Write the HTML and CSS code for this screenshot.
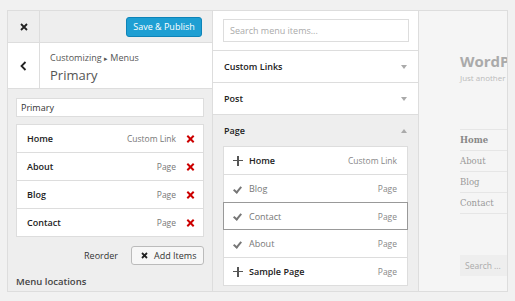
FILE: index.html
```html
<!DOCTYPE html>
<html lang="en">
  <head>
    <meta charset="UTF-8" />
    <title>Customizing Menus</title>
    <link rel="stylesheet" href="styles.css">
  </head>
  <body>
    <div class="frame">
      <div class="sidebar">
        <div class="sidebar-top">
          <div class="close-cell">
            <svg width="8" height="8" viewBox="0 0 8 8"><path d="M1 1L7 7M7 1L1 7" stroke="#222" stroke-width="1.8"/></svg>
          </div>
          <button class="publish">Save &amp; Publish</button>
        </div>
        <div class="sidebar-title">
          <div class="back-cell">
            <svg width="7" height="10" viewBox="0 0 7 10"><path d="M5.5 1L1.5 5L5.5 9" fill="none" stroke="#222" stroke-width="1.8"/></svg>
          </div>
          <div class="title-text">
            <div class="crumb">Customizing <span class="crumb-arrow">&#9656;</span> Menus</div>
            <div class="menu-title">Primary</div>
          </div>
        </div>
        <div class="sidebar-body">
          <div class="name-input">Primary</div>
          <ul class="menu-list">
            <li><b>Home</b><span class="type">Custom Link</span><span class="remove"></span></li>
            <li><b>About</b><span class="type">Page</span><span class="remove"></span></li>
            <li><b>Blog</b><span class="type">Page</span><span class="remove"></span></li>
            <li><b>Contact</b><span class="type">Page</span><span class="remove"></span></li>
          </ul>
          <div class="actions">
            <span class="reorder">Reorder</span>
            <button class="add-items">
              <svg width="7" height="7" viewBox="0 0 7 7"><path d="M1 1L6 6M6 1L1 6" stroke="#222" stroke-width="1.8"/></svg>
              Add Items
            </button>
          </div>
          <div class="locations">Menu locations</div>
        </div>
      </div>

      <div class="items-panel">
        <div class="search-box">
          <div class="search-input">Search menu items...</div>
        </div>
        <div class="section">Custom Links<span class="arrow down"></span></div>
        <div class="section">Post<span class="arrow down"></span></div>
        <div class="section open">Page<span class="arrow up"></span></div>
        <div class="section-body">
          <ul class="available">
            <li class="addable"><span class="icon plus"></span><b>Home</b><span class="type">Custom Link</span></li>
            <li class="added"><span class="icon check"></span>Blog<span class="type">Page</span></li>
            <li class="added focus"><span class="icon check"></span>Contact<span class="type">Page</span></li>
            <li class="added"><span class="icon check"></span>About<span class="type">Page</span></li>
            <li class="addable"><span class="icon plus"></span><b>Sample Page</b><span class="type">Page</span></li>
          </ul>
        </div>
      </div>

      <div class="preview">
        <div class="site-title">WordPress</div>
        <div class="site-desc">Just another WordPress site</div>
        <ul class="site-nav">
          <li class="current">Home</li>
          <li>About</li>
          <li>Blog</li>
          <li>Contact</li>
        </ul>
        <div class="site-search">Search ...</div>
      </div>
    </div>
  </body>
</html>
```

FILE: styles.css
```css
body {
  margin: 0;
  background-color: #f1f1f1;
  font-family: "Open Sans", Arial, sans-serif;
  color: #222;
}
ul {
  list-style: none;
  margin: 0;
  padding: 0;
}
.frame {
  display: flex;
  margin: 10px 0 0 7px;
  width: 499px;
  height: 280px;
  border: 1px solid #ddd;
  overflow: hidden;
}
.sidebar {
  width: 204px;
  flex-shrink: 0;
  background-color: #eee;
  border-right: 1px solid #ddd;
}
.sidebar-top {
  display: flex;
  align-items: center;
  justify-content: space-between;
  height: 31px;
  border-bottom: 1px solid #ddd;
}
.close-cell,
.back-cell {
  width: 32px;
  height: 100%;
  display: flex;
  align-items: center;
  justify-content: center;
  border-right: 1px solid #ddd;
  box-sizing: border-box;
}
.publish {
  margin-right: 10px;
  height: 20px;
  width: 76px;
  padding: 0;
  border: 1px solid #0e84b8;
  border-radius: 3px;
  background-color: #1e9fd3;
  color: white;
  font-family: "Open Sans", Arial, sans-serif;
  font-size: 9px;
}
.sidebar-title {
  display: flex;
  height: 45px;
  background-color: white;
  border-bottom: 1px solid #ddd;
}
.title-text {
  padding: 8px 0 0 10px;
}
.crumb {
  font-size: 9px;
  color: #555;
  line-height: 13px;
}
.crumb-arrow {
  font-size: 7px;
}
.menu-title {
  font-size: 13px;
  color: #555;
  line-height: 21px;
}
.sidebar-body {
  padding: 9px 8px 0;
}
.name-input {
  height: 17px;
  border: 1px solid #ddd;
  background-color: white;
  font-size: 9px;
  line-height: 17px;
  padding-left: 4px;
  color: #333;
}
.menu-list {
  margin-top: 7px;
  border: 1px solid #ddd;
  background-color: white;
}
.menu-list li {
  display: flex;
  align-items: center;
  height: 27px;
  padding: 0 9px 0 10px;
  border-top: 1px solid #ddd;
  font-size: 9px;
}
.menu-list li:first-child {
  border-top: none;
}
.menu-list b {
  flex: 1;
  font-weight: 600;
}
.type {
  color: #777;
  font-size: 8.5px;
}
.remove {
  width: 7px;
  height: 7px;
  margin-left: 11px;
  position: relative;
}
.remove::before,
.remove::after {
  content: "";
  position: absolute;
  left: -1px;
  top: 3px;
  width: 9px;
  height: 2px;
  background-color: #c00;
  transform: rotate(45deg);
}
.remove::after {
  transform: rotate(-45deg);
}
.actions {
  display: flex;
  align-items: center;
  justify-content: flex-end;
  margin-top: 9px;
}
.reorder {
  font-size: 9px;
  color: #333;
  margin-right: 13px;
}
.add-items {
  display: flex;
  align-items: center;
  gap: 6px;
  height: 19px;
  width: 73px;
  padding: 0 0 0 9px;
  border: 1px solid #bbb;
  border-radius: 3px;
  background-color: #f7f7f7;
  font-family: "Open Sans", Arial, sans-serif;
  font-size: 9px;
  color: #333;
}
.locations {
  margin-top: 10px;
  font-size: 9.5px;
  font-weight: 600;
  color: #444;
}
.items-panel {
  width: 205px;
  flex-shrink: 0;
  background-color: #eee;
  border-right: 1px solid #ddd;
}
.search-box {
  background-color: white;
  padding: 8px 9px 8px 10px;
  border-bottom: 1px solid #ddd;
}
.search-input {
  height: 21px;
  border: 1px solid #ddd;
  font-size: 9px;
  line-height: 21px;
  padding-left: 6px;
  color: #aaa;
}
.section {
  display: flex;
  align-items: center;
  justify-content: space-between;
  height: 31px;
  padding: 0 11px 0 11px;
  background-color: white;
  border-bottom: 1px solid #ddd;
  font-size: 9px;
  font-weight: 600;
}
.section.open {
  background-color: #eee;
  border-bottom: none;
}
.arrow {
  width: 0;
  height: 0;
  border-left: 3px solid transparent;
  border-right: 3px solid transparent;
}
.arrow.down {
  border-top: 4px solid #aaa;
}
.arrow.up {
  border-bottom: 4px solid #aaa;
}
.section-body {
  padding: 0 10px 0 10px;
}
.available {
  border: 1px solid #ddd;
  background-color: white;
}
.available li {
  display: flex;
  align-items: center;
  height: 27px;
  padding: 0 10px 0 9px;
  border-top: 1px solid #ddd;
  font-size: 9px;
  color: #777;
}
.available li:first-child {
  border-top: none;
}
.available li.focus {
  border: 1px solid #999;
  margin: 0 -1px;
  height: 26px;
}
.available li.focus + li {
  border-top: none;
}
.available b {
  font-weight: 600;
  color: #222;
}
.available .type {
  margin-left: auto;
  color: #888;
}
.icon {
  width: 10px;
  height: 10px;
  margin-right: 6px;
  position: relative;
}
.plus::before,
.plus::after {
  content: "";
  position: absolute;
  background-color: #555;
}
.plus::before {
  left: 0;
  top: 4px;
  width: 10px;
  height: 1.5px;
}
.plus::after {
  left: 4px;
  top: 0;
  width: 1.5px;
  height: 10px;
}
.check::before {
  content: "";
  position: absolute;
  left: 2px;
  top: 1px;
  width: 3px;
  height: 6px;
  border-right: 2px solid #777;
  border-bottom: 2px solid #777;
  transform: rotate(40deg);
}
.preview {
  flex: 1;
  min-width: 0;
  background-color: #f5f5f5;
  padding-left: 41px;
  overflow: hidden;
  white-space: nowrap;
}
.site-title {
  margin-top: 39px;
  font-size: 15px;
  font-weight: 700;
  color: #aaa;
  line-height: 22px;
}
.site-desc {
  font-size: 8px;
  color: #bbb;
  line-height: 12px;
}
.site-nav {
  margin-top: 45px;
  border-top: 1px solid #e6e6e6;
  font-family: "DejaVu Serif", "Liberation Serif", serif;
  font-size: 8.5px;
  color: #999;
}
.site-nav li {
  height: 20px;
  line-height: 20px;
  border-bottom: 1px solid #e6e6e6;
}
.site-nav .current {
  font-weight: 700;
  color: #888;
}
.site-search {
  margin-top: 41px;
  height: 21px;
  line-height: 21px;
  background-color: #eee;
  padding-left: 5px;
  font-size: 8.5px;
  color: #aaa;
}
```
